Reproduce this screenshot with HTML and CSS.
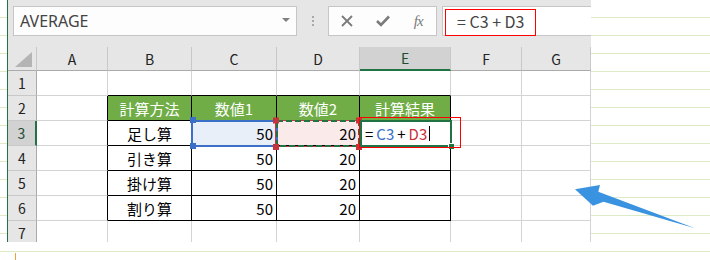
FILE: index.html
```html
<!DOCTYPE html>
<html lang="ja">
<head>
  <meta charset="UTF-8">
  <title>AVERAGE 数式</title>
  <link rel="stylesheet" href="styles.css">
</head>
<body>
  <div class="excel">
    <div class="toolbar">
      <div class="namebox">
        <span>AVERAGE</span>
        <span class="drop"></span>
      </div>
      <div class="dots"><i></i><i></i><i></i></div>
      <div class="fbtns">
        <span class="fb">
          <svg width="12" height="12" viewBox="0 0 12 12"><path d="M1 1 L11 11 M11 1 L1 11" stroke="#7a7a7a" stroke-width="1.8" fill="none"/></svg>
        </span>
        <span class="fb">
          <svg width="14" height="12" viewBox="0 0 14 12"><path d="M1 6 L5 10 L13 1.5" stroke="#7a7a7a" stroke-width="2.6" fill="none"/></svg>
        </span>
        <span class="fb fx">fx</span>
      </div>
      <div class="formula">
        <span>= C3 + D3</span>
        <div class="annot-f"></div>
      </div>
    </div>

    <div class="sheet">
      <!-- header row -->
      <div class="c ch corner"></div>
      <div class="c ch">A</div>
      <div class="c ch">B</div>
      <div class="c ch">C</div>
      <div class="c ch">D</div>
      <div class="c ch sel-col">E</div>
      <div class="c ch">F</div>
      <div class="c ch">G</div>

      <!-- 1 -->
      <div class="c rh">1</div>
      <div class="c"></div>
      <div class="c tt"></div>
      <div class="c tt"></div>
      <div class="c tt"></div>
      <div class="c tt"></div>
      <div class="c"></div>
      <div class="c"></div>

      <!-- 2 -->
      <div class="c rh">2</div>
      <div class="c tl"></div>
      <div class="c t hd">計算方法</div>
      <div class="c t hd">数値1</div>
      <div class="c t hd">数値2</div>
      <div class="c t hd">計算結果</div>
      <div class="c"></div>
      <div class="c"></div>

      <!-- 3 -->
      <div class="c rh sel-row">3</div>
      <div class="c tl"></div>
      <div class="c t ctr">足し算</div>
      <div class="c t num blue-bg">50</div>
      <div class="c t num pink-bg">20</div>
      <div class="c t edit">= <span class="ref-c">C3</span> + <span class="ref-d">D3</span><span class="caret"></span></div>
      <div class="c"></div>
      <div class="c"></div>

      <!-- 4 -->
      <div class="c rh">4</div>
      <div class="c tl"></div>
      <div class="c t ctr">引き算</div>
      <div class="c t num">50</div>
      <div class="c t num">20</div>
      <div class="c t"></div>
      <div class="c"></div>
      <div class="c"></div>

      <!-- 5 -->
      <div class="c rh">5</div>
      <div class="c tl"></div>
      <div class="c t ctr">掛け算</div>
      <div class="c t num">50</div>
      <div class="c t num">20</div>
      <div class="c t"></div>
      <div class="c"></div>
      <div class="c"></div>

      <!-- 6 -->
      <div class="c rh">6</div>
      <div class="c tl"></div>
      <div class="c t ctr">割り算</div>
      <div class="c t num">50</div>
      <div class="c t num">20</div>
      <div class="c t"></div>
      <div class="c"></div>
      <div class="c"></div>

      <!-- 7 -->
      <div class="c rh">7</div>
      <div class="c"></div>
      <div class="c"></div>
      <div class="c"></div>
      <div class="c"></div>
      <div class="c"></div>
      <div class="c"></div>
      <div class="c"></div>

      <!-- selection overlays -->
      <div class="sel-blue"></div>
      <svg class="ants" width="92" height="34" viewBox="0 0 92 34">
        <rect x="1.5" y="1.5" width="85" height="26" fill="none" stroke="#d0343c" stroke-width="1"/>
        <rect x="3" y="2" width="82" height="25" fill="none" stroke="#217346" stroke-width="2" stroke-dasharray="6 3"/>
        <rect x="-1" y="-1.5" width="6" height="6" fill="#c8323c"/>
        <rect x="82" y="-1.5" width="6" height="6" fill="#c8323c"/>
        <rect x="-1" y="25" width="6" height="6" fill="#c8323c"/>
        <rect x="82" y="25" width="6" height="6" fill="#c8323c"/>
      </svg>
      <i class="h-blue h1"></i>
      <i class="h-blue h2"></i>
      <div class="active"><i class="fill"></i></div>
      <div class="annot-e"></div>
    </div>
  </div>

  <i class="mark"></i>

  <svg class="arrow" width="130" height="50" viewBox="570 182 130 50">
    <polygon points="575,189.3 600,185 598.3,191.7 695,228.3 603.5,201.7 593,205.7" fill="#3a93e0"/>
  </svg>
</body>
</html>
```

FILE: styles.css
```css
body {
  margin: 0;
  width: 710px;
  height: 260px;
  position: relative;
  overflow: hidden;
  font-family: "Noto Sans CJK JP", "Noto Sans", sans-serif;
  background-color: #fff;
  background-image: repeating-linear-gradient(to bottom, transparent 0, transparent 17px, #dcebc6 17px, #dcebc6 18px);
}

.excel {
  margin-left: 7px;
  width: 583px;
  height: 242px;
  border-left: 1px solid #217346;
  background-color: #e6e6e6;
  overflow: hidden;
}

/* formula bar */
.toolbar {
  display: flex;
  height: 47px;
  padding: 6px 0 0 5px;
  box-sizing: border-box;
}

.namebox {
  width: 284px;
  height: 30px;
  box-sizing: border-box;
  border: 1px solid #c6c6c6;
  background-color: #fdfdfd;
  display: flex;
  align-items: center;
  justify-content: space-between;
  padding: 0 6px 0 6px;
  font-family: "Noto Sans", sans-serif;
  font-size: 16px;
  color: #444;
}

.drop {
  width: 0;
  height: 0;
  border-left: 4px solid transparent;
  border-right: 4px solid transparent;
  border-top: 4px solid #808080;
  margin-bottom: 2px;
}

.dots {
  width: 31px;
  height: 30px;
  display: flex;
  flex-direction: column;
  align-items: center;
  justify-content: center;
  gap: 2px;
}

.dots i {
  display: block;
  width: 2px;
  height: 2px;
  background-color: #a8a8a8;
}

.fbtns {
  width: 109px;
  height: 30px;
  box-sizing: border-box;
  border: 1px solid #c6c6c6;
  background-color: #fdfdfd;
  display: flex;
}

.fb {
  width: 36px;
  display: flex;
  align-items: center;
  justify-content: center;
}

.fx {
  font-family: "Liberation Serif", serif;
  font-style: italic;
  font-size: 15px;
  color: #7a7a7a;
  letter-spacing: -1px;
}

.formula {
  position: relative;
  flex: 1;
  margin-left: 5px;
  height: 30px;
  box-sizing: border-box;
  border: 1px solid #c6c6c6;
  border-right: none;
  background-color: #fff;
  display: flex;
  align-items: center;
  padding-left: 14px;
  font-size: 16px;
  color: #444;
}

.annot-f {
  position: absolute;
  left: 2px;
  top: 2px;
  width: 91px;
  height: 27px;
  box-sizing: border-box;
  border: 1px solid #f00;
}

/* grid */
.sheet {
  position: relative;
  display: grid;
  grid-template-columns: 29px 71px 84px 85px 83px 91px 71px 69px;
  grid-template-rows: 24px repeat(7, 25px);
  background-color: #fff;
}

.c {
  box-sizing: border-box;
  border-right: 1px solid #d4d4d4;
  border-bottom: 1px solid #d4d4d4;
  display: flex;
  align-items: center;
  padding: 0 3px;
  font-size: 15px;
  color: #000;
  white-space: nowrap;
}

.ch {
  background-color: #e6e6e6;
  border-right-color: #c8c8c8;
  border-bottom-color: #ababab;
  justify-content: center;
  font-size: 14px;
  color: #222;
}

.rh {
  background-color: #e6e6e6;
  border-right-color: #ababab;
  border-bottom-color: #c8c8c8;
  justify-content: center;
  font-size: 14px;
  color: #222;
}

.corner {
  position: relative;
}

.corner::after {
  content: "";
  position: absolute;
  right: 4px;
  bottom: 3px;
  width: 17px;
  height: 15px;
  background-color: #b4b4b4;
  clip-path: polygon(100% 0, 100% 100%, 0 100%);
}

.sel-col {
  background-color: #d2d2d2;
  border-bottom: 2px solid #217346;
  color: #1e4d33;
}

.sel-row {
  background-color: #d2d2d2;
  border-right: 2px solid #217346;
  color: #1e4d33;
}

.t {
  border-right-color: #000;
  border-bottom-color: #000;
}

.tl {
  border-right-color: #000;
}

.tt {
  border-bottom-color: #000;
}

.hd {
  background-color: #70ad47;
  color: #fff;
  justify-content: center;
}

.ctr {
  justify-content: center;
}

.num {
  justify-content: flex-end;
}

.blue-bg {
  background-color: #e8eff9;
}

.pink-bg {
  background-color: #fbeaea;
}

.edit {
  padding-left: 5px;
}

.ref-c {
  color: #3a6fc8;
  margin: 0 3px;
}

.ref-d {
  color: #c8303a;
  margin-left: 3px;
}

.caret {
  display: inline-block;
  width: 1px;
  height: 15px;
  margin-left: 2px;
  background-color: #000;
}

/* overlays */
.sel-blue {
  position: absolute;
  left: 183px;
  top: 73px;
  width: 87px;
  height: 27px;
  box-sizing: border-box;
  border: 2px solid #3c70c8;
}

.ants {
  position: absolute;
  left: 266px;
  top: 72px;
  overflow: visible;
}

.h-blue {
  position: absolute;
  width: 6px;
  height: 6px;
  background-color: #3c70c8;
  left: 182px;
}

.h1 { top: 70px; }
.h2 { top: 96px; }

.active {
  position: absolute;
  left: 352px;
  top: 73px;
  width: 92px;
  height: 27px;
  box-sizing: border-box;
  border: 2px solid #217346;
}

.fill {
  position: absolute;
  right: -4px;
  bottom: -4px;
  width: 5px;
  height: 5px;
  background-color: #217346;
  border-left: 1px solid #fff;
  border-top: 1px solid #fff;
}

.annot-e {
  position: absolute;
  left: 351px;
  top: 70px;
  width: 102px;
  height: 31px;
  box-sizing: border-box;
  border: 1px solid #f00;
}

.mark {
  position: absolute;
  left: 15px;
  top: 253px;
  width: 1px;
  height: 7px;
  background-color: #eba23a;
}

.arrow {
  position: absolute;
  left: 570px;
  top: 182px;
}
```
